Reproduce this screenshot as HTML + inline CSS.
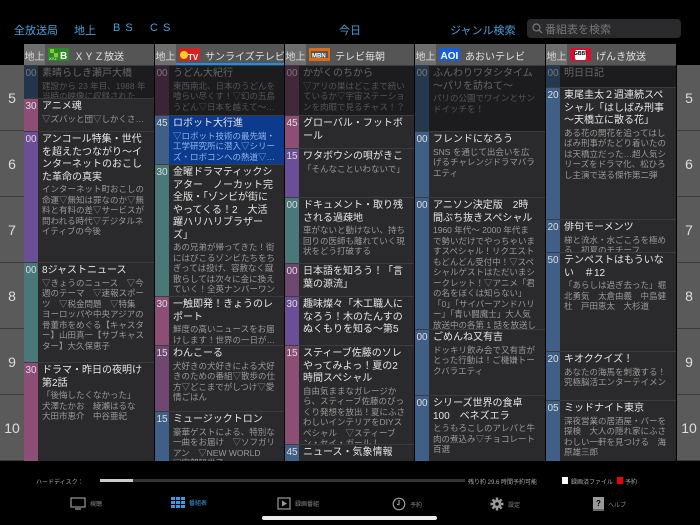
<!DOCTYPE html>
<html><head><meta charset="utf-8"><style>
*{margin:0;padding:0;box-sizing:border-box}
body{width:700px;height:525px;background:#000;overflow:hidden;font-family:"Liberation Sans","Noto Sans CJK JP",sans-serif;position:relative;color:#ddd}
.top{position:absolute;top:22px;font-size:11px;color:#4b9fd5;letter-spacing:0px}
.search{position:absolute;left:527px;top:19px;width:154px;height:19px;background:#2a2a2c;border-radius:4px;font-size:11px;color:#777;padding:2px 0 0 18px}
.hd{position:absolute;top:44px;height:21px;background:#555;font-size:10px;color:#e0e0e0}
.hd .ch{position:absolute;left:0;top:0;width:21px;height:21px;background:#6e6e6e;color:#ddd;font-size:10px;padding-top:4px;text-align:center}
.hd .lg{position:absolute;left:24px;top:4px;height:13px;width:21px}
.hd .nm{position:absolute;left:50px;top:4px;white-space:nowrap}
.tc{position:absolute;width:24px;background:#5a5a5a;border-bottom:1px solid #3a3a3a;color:#ddd;font-size:14px;text-align:center;display:flex;align-items:center;justify-content:center}
.p{position:absolute;background:#2a2a2c;border-top:1px solid #3c3c3e;overflow:hidden}
.p .m{position:absolute;left:0;top:0;bottom:0;width:14px;font-size:10px;color:#ddd;text-align:center;padding-top:2px}
.p .c{position:absolute;left:14px;right:0;top:0;padding:2px 8px 0 4px}
.t{font-size:10px;line-height:12.5px;color:#e6e6e6}
.d{font-size:8.5px;line-height:10.5px;color:#999}
.dim{background:#1c1c1e}
.dim .t{color:#666}.dim .d{color:#555}.dim .m{color:#777}
.sel{background:#0c3a8c}
.sel .d{color:#8fb5f0}
.b{background:#3f5f87}.pk{background:#8c4e74}.pu{background:#6a4e96}.te{background:#4a7878}.mg{background:#6e4670}
.nav{position:absolute;top:497px;font-size:6px;color:#888;display:flex;align-items:center;gap:4px}
</style></head><body>

<div class="top" style="left:14px">全放送局</div>
<div class="top" style="left:74px">地上</div>
<div class="top" style="left:113px;letter-spacing:5px">BS</div>
<div class="top" style="left:150px;letter-spacing:5px">CS</div>
<div class="top" style="left:339px">今日</div>
<div class="top" style="left:450px">ジャンル検索</div>
<div class="search"><svg style="position:absolute;left:5px;top:4px" width="11" height="11" viewBox="0 0 11 11"><circle cx="4.5" cy="4.5" r="3.5" stroke="#777" stroke-width="1.2" fill="none"/><path d="M7 7l3 3" stroke="#777" stroke-width="1.3"/></svg>番組表を検索</div>

<div class="hd" style="left:24px;width:130px"><div class="ch">地上</div><svg class="lg" viewBox="0 0 21 13"><rect width="21" height="13" fill="#2a8a2a"/><rect x="2" y="1" width="4" height="4" fill="#8c2"/><rect x="6" y="5" width="4" height="4" fill="#8c2"/><text x="1" y="12" font-size="4" fill="#fff">XYZ</text><text x="12" y="11" font-size="10" font-weight="bold" fill="#fff">B</text></svg><div class="nm">ＸＹＺ放送</div></div>
<div class="hd" style="left:155px;width:129px;border-bottom:2px solid #1e8ee8"><div class="ch">地上</div><svg class="lg" viewBox="0 0 21 13"><rect width="21" height="13" fill="#d82020"/><circle cx="5" cy="7" r="4" fill="#f5d020"/><text x="9" y="12" font-size="8" font-weight="bold" fill="#fff">TV</text></svg><div class="nm">サンライズテレビ</div></div>
<div class="hd" style="left:285px;width:129px"><div class="ch">地上</div><svg class="lg" viewBox="0 0 21 13"><rect width="21" height="13" fill="#e06a10"/><rect x="2" y="3" width="17" height="7" fill="#555"/><text x="3" y="9.5" font-size="6" font-weight="bold" fill="#fff">MBN</text></svg><div class="nm">テレビ毎朝</div></div>
<div class="hd" style="left:415px;width:130px"><div class="ch">地上</div><svg class="lg" viewBox="0 0 21 13"><rect width="21" height="13" fill="#1560d8"/><text x="1.5" y="11" font-size="10" font-weight="bold" fill="#fff">AOI</text></svg><div class="nm">あおいテレビ</div></div>
<div class="hd" style="left:546px;width:130px"><div class="ch">地上</div><svg class="lg" viewBox="0 0 21 13"><rect width="21" height="13" fill="#d81030"/><rect x="5" y="2" width="11" height="10" rx="2" fill="#fff"/><text x="4" y="7" font-size="5" font-weight="bold" fill="#000">GBB!</text></svg><div class="nm">げんき放送</div></div>

<div class="tc" style="left:0;top:65px;height:66px">5</div>
<div class="tc" style="left:0;top:131px;height:66px">6</div>
<div class="tc" style="left:0;top:197px;height:66px">7</div>
<div class="tc" style="left:0;top:263px;height:66px">8</div>
<div class="tc" style="left:0;top:329px;height:66px">9</div>
<div class="tc" style="left:0;top:395px;height:66px">10</div>
<div class="tc" style="left:677px;top:65px;height:66px">5</div>
<div class="tc" style="left:677px;top:131px;height:66px">6</div>
<div class="tc" style="left:677px;top:197px;height:66px">7</div>
<div class="tc" style="left:677px;top:263px;height:66px">8</div>
<div class="tc" style="left:677px;top:329px;height:66px">9</div>
<div class="tc" style="left:677px;top:395px;height:66px">10</div>

<div class="p dim" style="left:24px;width:130px;top:65px;height:33px"><div class="m" style="background:#24344a">00</div><div class="c"><div class="t">素晴らしき瀬戸大橋</div><div class="d">建設から 23 年目、1988 年当時の映像に収録された…</div></div></div>
<div class="p" style="left:24px;width:130px;top:98px;height:33px"><div class="m pk">30</div><div class="c"><div class="t">アニメ魂</div><div class="d">▽ズバッと団▽しかくさ…</div></div></div>
<div class="p" style="left:24px;width:130px;top:131px;height:131px"><div class="m pu">00</div><div class="c"><div class="t">アンコール特集・世代を超えたつながり～インターネットのおこした革命の真実</div><div class="d">インターネット町おこしの命運▽無知は罪なのか▽無料と有料の差▽サービスが問われる時代▽デジタルネイティブの今後</div></div></div>
<div class="p" style="left:24px;width:130px;top:262px;height:100px"><div class="m te">00</div><div class="c"><div class="t">8ジャストニュース</div><div class="d">▽きょうのニュース　▽今週のテーマ　▽速報スポーツ　▽税金問題　▽特集 ヨーロッパや中央アジアの骨董市をめぐる【キャスター】山田真一【サブキャスター】大久保恵子</div></div></div>
<div class="p" style="left:24px;width:130px;top:362px;height:99px"><div class="m pk">30</div><div class="c"><div class="t">ドラマ・昨日の夜明け　第2話</div><div class="d">「後悔したくなかった」 犬澤たかお　綾瀬はるな　大田市恵介　中谷亜紀</div></div></div>

<div class="p dim" style="left:155px;width:129px;top:65px;height:50px"><div class="m" style="background:#3a2438">00</div><div class="c"><div class="t">うどん大紀行</div><div class="d">東西南北、日本のうどんを喰らい尽くす！▽幻の五島うどん▽日本を越えて～…</div></div></div>
<div class="p sel" style="left:155px;width:129px;top:115px;height:49px"><div class="m b">45</div><div class="c"><div class="t">ロボット大行進</div><div class="d">▽ロボット技術の最先端・工学研究所に潜入▽シリーズ・ロボコンへの熱道▽…</div></div></div>
<div class="p" style="left:155px;width:129px;top:164px;height:132px"><div class="m te">30</div><div class="c"><div class="t">金曜ドラマティックシアター　ノーカット完全版・「ゾンビが街にやってくる！2　大活躍ハリハリブラザーズ」</div><div class="d">あの兄弟が帰ってきた！街にはびこるゾンビたちをちぎっては投げ、容赦なく蹴散らしては次々に金に換えていく！全英ナンバーワン痛快コメディアクションをノーカット完全版で！</div></div></div>
<div class="p" style="left:155px;width:129px;top:296px;height:49px"><div class="m pk">30</div><div class="c"><div class="t">一触即発！きょうのレポート</div><div class="d">鮮度の高いニュースをお届けします！世界の一日が…</div></div></div>
<div class="p" style="left:155px;width:129px;top:345px;height:66px"><div class="m mg">15</div><div class="c"><div class="t">わんこーる</div><div class="d">犬好きの犬好きによる犬好きのための番組▽散歩の仕方▽どこまでがしつけ▽愛情ごはん</div></div></div>
<div class="p" style="left:155px;width:129px;top:411px;height:50px"><div class="m b">15</div><div class="c"><div class="t">ミュージックトロン</div><div class="d">豪華ゲストによる、特別な一曲をお届け　▽ソフガリアン　▽NEW WORLD　▽安部智世子</div></div></div>

<div class="p dim" style="left:285px;width:129px;top:65px;height:50px"><div class="m" style="background:#42283a">00</div><div class="c"><div class="t">かがくのちから</div><div class="d">▽アリの巣はどこまで続いているか▽宇宙ステーションを肉眼で見るチャス！？</div></div></div>
<div class="p" style="left:285px;width:129px;top:115px;height:33px"><div class="m pk">45</div><div class="c"><div class="t">グローバル・フットボール</div></div></div>
<div class="p" style="left:285px;width:129px;top:148px;height:49px"><div class="m pu">15</div><div class="c"><div class="t" style="white-space:nowrap">ワタボウシの唄がきこ</div><div class="d">「そんなこといわないで」</div></div></div>
<div class="p" style="left:285px;width:129px;top:197px;height:66px"><div class="m te">00</div><div class="c"><div class="t">ドキュメント・取り残される過疎地</div><div class="d">車がないと動けない、持ち回りの医師も離れていく現状をどう打破する</div></div></div>
<div class="p" style="left:285px;width:129px;top:263px;height:33px"><div class="m mg">00</div><div class="c"><div class="t">日本語を知ろう！「言葉の源流」</div></div></div>
<div class="p" style="left:285px;width:129px;top:296px;height:49px"><div class="m pu">30</div><div class="c"><div class="t">趣味燦々「木工職人になろう！木のたんすのぬくもりを知る～第5</div></div></div>
<div class="p" style="left:285px;width:129px;top:345px;height:99px"><div class="m pk">15</div><div class="c"><div class="t">スティーブ佐藤のソレやってみよっ！夏の2時間スペシャル</div><div class="d">自由気ままなガレージから、スティーブ佐藤のびっくり発想を放出！夏にふさわしいインテリアをDIYスペシャル　▽スティーブン・セイ・ガール！</div></div></div>
<div class="p" style="left:285px;width:129px;top:444px;height:17px"><div class="m b">45</div><div class="c"><div class="t">ニュース・気象情報</div></div></div>

<div class="p dim" style="left:415px;width:130px;top:65px;height:66px"><div class="m" style="background:#243850">00</div><div class="c"><div class="t">ふんわりワタシタイム～パリを訪ねて～</div><div class="d">パリの公園でワインとサンドイッチを！</div></div></div>
<div class="p" style="left:415px;width:130px;top:131px;height:66px"><div class="m b">00</div><div class="c"><div class="t">フレンドになろう</div><div class="d">SNS を通じて出会いを広げるチャレンジドラマバラエティ</div></div></div>
<div class="p" style="left:415px;width:130px;top:197px;height:132px"><div class="m b">00</div><div class="c"><div class="t">アニソン決定版　2時間ぶち抜きスペシャル</div><div class="d">1960 年代～ 2000 年代まで勢いだけでやっちゃいますスペシャル！リクエストもどんどん受付中！▽スペシャルゲストはただいまシークレット！▽アニメ「君の名をぼくは知らない」「0」「サイバーアンドハリー」「青い闘魔士」大人気放送中の各第 1 話を放送します！</div></div></div>
<div class="p" style="left:415px;width:130px;top:329px;height:66px"><div class="m b">00</div><div class="c"><div class="t">ごめんね又有吉</div><div class="d">ドッキリ飲み会で又有吉がとった行動は！ご機嫌トークバラエティ</div></div></div>
<div class="p" style="left:415px;width:130px;top:395px;height:66px"><div class="m b">00</div><div class="c"><div class="t">シリーズ世界の食卓 100　ベネズエラ</div><div class="d">とうもろこしのアレパと牛肉の煮込み▽チョコレート百選</div></div></div>

<div class="p dim" style="left:546px;width:130px;top:65px;height:22px"><div class="m" style="background:#243850">00</div><div class="c"><div class="t">明日日記</div></div></div>
<div class="p" style="left:546px;width:130px;top:87px;height:132px"><div class="m b">20</div><div class="c"><div class="t">東尾圭太２週連続スペシャル「はしばみ刑事～天橋立に散る花」</div><div class="d">ある花の開花を追ってはしばみ刑事がたどり着いたのは天橋立だった…超人気シリーズをドラマ化、松ひろし主演で送る傑作第二弾</div></div></div>
<div class="p" style="left:546px;width:130px;top:219px;height:33px"><div class="m b">20</div><div class="c"><div class="t">俳句モーメンツ</div><div class="d">梯と流水・水ごころを極める　初夏のモチーフ</div></div></div>
<div class="p" style="left:546px;width:130px;top:252px;height:99px"><div class="m b">50</div><div class="c"><div class="t">テンペストはもういない　＃12</div><div class="d">「あらしは過ぎ去った」堀北勇気　太倉由義　中島健杜　戸田恵太　大杉道</div></div></div>
<div class="p" style="left:546px;width:130px;top:351px;height:49px"><div class="m b">20</div><div class="c"><div class="t">キオククイズ！</div><div class="d">あなたの海馬を刺激する！究極脳活エンターテイメン</div></div></div>
<div class="p" style="left:546px;width:130px;top:400px;height:61px"><div class="m b">05</div><div class="c"><div class="t">ミッドナイト東京</div><div class="d">深夜営業の居酒屋・バーを探検　大人の隠れ家にふさわしい一軒を見つける　海原雄三郎</div></div></div>

<div style="position:absolute;left:36px;top:477px;font-size:6px;color:#aaa">ハードディスク：</div>
<div style="position:absolute;left:100px;top:479px;width:365px;height:3px;background:#333"><div style="width:33px;height:3px;background:#ccc"></div></div>
<div style="position:absolute;left:468px;top:477px;font-size:6px;color:#aaa">残り約 29.6 時間予約可能</div>
<div style="position:absolute;left:562px;top:477px;width:6px;height:7px;background:#fff"></div>
<div style="position:absolute;left:571px;top:477px;font-size:6px;color:#aaa">録画済ファイル</div>
<div style="position:absolute;left:617px;top:477px;width:6px;height:7px;background:#e00"></div>
<div style="position:absolute;left:625px;top:477px;font-size:6px;color:#aaa">予約</div>

<div class="nav" style="left:70px"><svg width="16" height="13" viewBox="0 0 16 13"><rect x="1" y="1" width="14" height="9" fill="none" stroke="#999" stroke-width="1.2"/><path d="M5 12h6" stroke="#999" stroke-width="1.3"/></svg>視聴</div>
<div class="nav" style="left:171px;color:#3a9be0"><svg width="14" height="11" viewBox="0 0 14 11"><g fill="#3a9be0"><rect x="0" y="0" width="4" height="3"/><rect x="5" y="0" width="4" height="3"/><rect x="10" y="0" width="4" height="3"/><rect x="0" y="4" width="4" height="3"/><rect x="5" y="4" width="4" height="3"/><rect x="10" y="4" width="4" height="3"/><rect x="0" y="8" width="4" height="3"/><rect x="5" y="8" width="4" height="3"/><rect x="10" y="8" width="4" height="3"/></g></svg>番組表</div>
<div class="nav" style="left:277px"><svg width="14" height="13" viewBox="0 0 14 13"><rect x="1" y="1" width="12" height="11" fill="none" stroke="#999" stroke-width="1.2"/><path d="M5 3.5v6l5-3z" fill="#999"/></svg>録画番組</div>
<div class="nav" style="left:392px"><svg width="14" height="14" viewBox="0 0 14 14"><circle cx="7" cy="7" r="5.8" fill="none" stroke="#999" stroke-width="1.2"/><path d="M7 3v4.5h-2" fill="none" stroke="#999" stroke-width="1.2"/></svg>予約</div>
<div class="nav" style="left:490px"><svg width="14" height="14" viewBox="0 0 14 14"><g stroke="#999" stroke-width="2.4"><path d="M7 0.5v13M0.5 7h13M2.4 2.4l9.2 9.2M11.6 2.4l-9.2 9.2"/></g><circle cx="7" cy="7" r="4.2" fill="#999"/><circle cx="7" cy="7" r="1.8" fill="#000"/></svg>設定</div>
<div class="nav" style="left:593px"><svg width="11" height="14" viewBox="0 0 11 14"><rect x="0" y="0" width="11" height="12" fill="#999"/><rect x="0" y="12" width="11" height="2" fill="#666"/><text x="3" y="9" font-size="8" font-weight="bold" fill="#000">?</text></svg>ヘルプ</div>

<div style="position:absolute;left:262px;top:516px;width:175px;height:4px;border-radius:2px;background:#eee"></div>
</body></html>
